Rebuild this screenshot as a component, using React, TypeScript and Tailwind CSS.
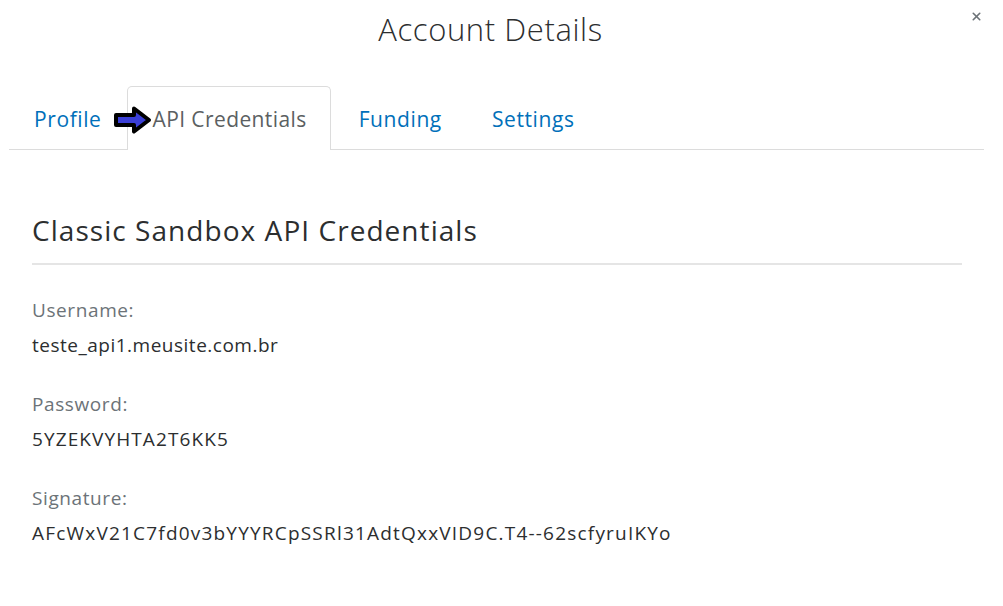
import { X } from "lucide-react";

const TABS = ["Profile", "API Credentials", "Funding", "Settings"];

const FIELDS = [
  { label: "Username:", value: "teste_api1.meusite.com.br", spacing: "tracking-[0.5px]" },
  { label: "Password:", value: "5YZEKVYHTA2T6KK5", spacing: "tracking-[1.1px]" },
  {
    label: "Signature:",
    value: "AFcWxV21C7fd0v3bYYYRCpSSRl31AdtQxxVID9C.T4--62scfyruIKYo",
    spacing: "tracking-[1.2px]",
  },
];

function PointerArrow() {
  return (
    <svg width="42" height="30" viewBox="0 0 42 30" className="absolute left-[112px] top-[105px]">
      <path
        d="M4 10 H22 V3.5 L37 15 L22 26.5 V20 H4 Z"
        fill="#3b3fd6"
        stroke="#000"
        strokeWidth="4"
        strokeLinejoin="round"
      />
    </svg>
  );
}

export default function App() {
  const active = "API Credentials";

  return (
    <div className="relative w-[1003px] h-[606px] bg-white font-['Open_Sans',sans-serif] text-[#2c2e2f]">
      <div className="h-[58px] pr-[22px] flex items-center justify-center">
        <h1 className="text-[31px] font-light tracking-[0.6px] text-[#2c2e2f]">Account Details</h1>
      </div>
      <button className="absolute right-[20px] top-[10px] text-[#6c7378]">
        <X size={13} strokeWidth={3} />
      </button>

      <div className="mt-[28px] ml-[9px] mr-[19px] flex items-end border-b border-[#dcdcdc] h-[64px]">
        {TABS.map((tab) =>
          tab === active ? (
            <div
              key={tab}
              className="h-[64px] -mb-px mr-[3px] pt-[3px] pl-[25px] pr-[23px] flex items-center bg-white border border-b-0 border-[#dcdcdc] rounded-t-[5px] text-[21px] tracking-[0.4px] text-[#5b5f62]"
            >
              {tab}
            </div>
          ) : (
            <div
              key={tab}
              className="h-[63px] pt-[4px] px-[25px] flex items-center text-[21px] tracking-[0.6px] text-[#0070ba]"
            >
              {tab}
            </div>
          )
        )}
      </div>
      <PointerArrow />

      <div className="ml-[32px] mr-[41px]">
        <h2 className="mt-[62px] text-[28px] leading-[36px] tracking-[1.05px] text-[#2c2e2f]">
          Classic Sandbox API Credentials
        </h2>
        <div className="mt-[15px] border-b-2 border-[#e5e5e5]" />
        <div className="mt-[32px] flex flex-col gap-[33px]">
          {FIELDS.map((f) => (
            <div key={f.label} className="flex flex-col gap-[9px]">
              <div className="text-[19px] leading-[26px] tracking-[0.6px] text-[#6c7378]">{f.label}</div>
              <div className={`text-[19px] leading-[26px] text-[#2c2e2f] ${f.spacing}`}>{f.value}</div>
            </div>
          ))}
        </div>
      </div>
    </div>
  );
}
